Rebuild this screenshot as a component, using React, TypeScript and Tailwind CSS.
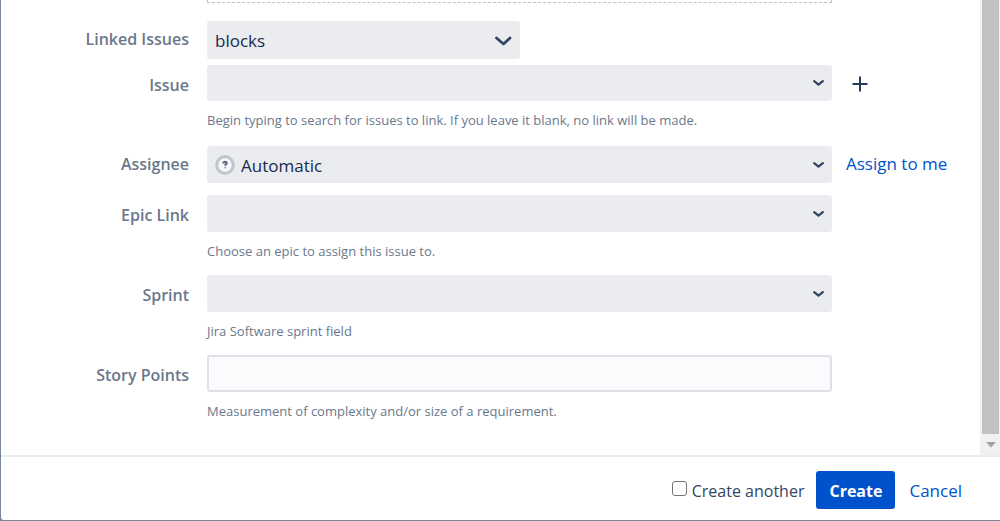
import type { ReactNode } from "react";

const controlClass =
  "block w-full appearance-none rounded-[3px] bg-[#ebecf0] pt-[2px] pr-8 text-[17px] text-[#172b4d] outline-none focus:ring-2 focus:ring-[#4c9aff]";

function Chevron({ large = false }: { large?: boolean }) {
  return large ? (
    <svg
      viewBox="0 0 18 12"
      aria-hidden="true"
      className="pointer-events-none absolute top-1/2 right-2 h-3 w-[18px] -translate-y-1/2"
    >
      <path d="M2.500 4 9.500 10l6.500-6" fill="none" stroke="#344563" strokeWidth="2.800" strokeLinecap="round" strokeLinejoin="round" />
    </svg>
  ) : (
    <svg
      viewBox="0 0 12 8"
      aria-hidden="true"
      className="pointer-events-none absolute top-1/2 right-2 h-2 w-3 -translate-y-1/2"
    >
      <path d="M2.200 2.200 6.500 5.600l4.300-3.400" fill="none" stroke="#344563" strokeWidth="2.300" strokeLinecap="round" strokeLinejoin="round" />
    </svg>
  );
}

type FieldProps = {
  id: string;
  label: string;
  help?: string;
  aside?: ReactNode;
  className?: string;
  children: ReactNode;
};

function Field({ id, label, help, aside, className = "", children }: FieldProps) {
  return (
    <div className={`flex items-start ${className}`}>
      <label
        htmlFor={id}
        className={`w-[188px] shrink-0 text-right text-base leading-6 font-semibold text-[#6b778c] ${help ? "pt-2" : "pt-1.5"}`}
      >
        {label}
      </label>
      <div className="ml-[18px] min-w-0 flex-1">
        {children}
        {help && <p className="mt-2 text-[13px] leading-[22px] text-[#6b778c]">{help}</p>}
      </div>
      <div className="w-[148px] shrink-0 pl-[14px]">{aside}</div>
    </div>
  );
}

function UnassignedAvatar() {
  return (
    <svg
      viewBox="0 0 20 20"
      aria-hidden="true"
      className="pointer-events-none absolute top-1/2 left-2 size-5 -translate-y-1/2"
    >
      <circle cx="10" cy="10" r="8.300" fill="#f7f8fa" stroke="#c1c7d0" strokeWidth="3.200" />
      <path
        d="M8.400 8.400c0-1.200.7-1.600 1.700-1.600s1.600.5 1.600 1.400c0 1.100-1.500 1.100-1.500 2.600"
        fill="none"
        stroke="#5e6c84"
        strokeWidth="2.200"
      />
      <circle cx="10.200" cy="12.600" r="0.900" fill="#8993a4" />
    </svg>
  );
}

export default function App() {
  return (
    <div className="flex min-h-screen flex-col bg-[#7a869a] pb-px pl-px font-['Open_Sans','Noto_Sans',sans-serif]">
      <form className="flex flex-1 flex-col rounded-bl-[3px] bg-white" onSubmit={(e) => e.preventDefault()}>
        <div className="flex flex-1">
          <div className="min-w-0 flex-1">
            <div className="mr-[148px] ml-[206px] h-[3px] border border-t-0 border-dashed border-[#c1c1c1]" />
            <Field id="linked" label="Linked Issues" className="pt-[18px]">
              <div className="relative w-1/2 min-w-[313px]">
                <select id="linked" className={`${controlClass} h-[38px] pl-2`}>
                  <option>blocks</option>
                </select>
                <Chevron large />
              </div>
            </Field>
            <Field
              id="issue"
              label="Issue"
              help="Begin typing to search for issues to link. If you leave it blank, no link will be made."
              className="pt-[6px]"
              aside={
                <button type="button" aria-label="Link another issue" className="flex h-[38px] w-7 items-center justify-center">
                  <svg viewBox="0 0 16 16" aria-hidden="true" className="size-4">
                    <path d="M8 .5v15M.5 8h15" fill="none" stroke="#253858" strokeWidth="2" />
                  </svg>
                </button>
              }
            >
              <div className="relative">
                <select id="issue" className={`${controlClass} h-9 pl-2`}>
                  <option value=""></option>
                </select>
                <Chevron />
              </div>
            </Field>
            <Field
              id="assignee"
              label="Assignee"
              className="pt-[15px]"
              aside={
                <a href="#assign" className="block pt-1.5 text-[17px] leading-6 whitespace-nowrap text-[#0052cc]">
                  Assign to me
                </a>
              }
            >
              <div className="relative">
                <select id="assignee" className={`${controlClass} h-[37px] pl-[34px]`}>
                  <option>Automatic</option>
                </select>
                <UnassignedAvatar />
                <Chevron />
              </div>
            </Field>
            <Field id="epic" label="Epic Link" help="Choose an epic to assign this issue to." className="pt-3">
              <div className="relative">
                <select id="epic" className={`${controlClass} h-[37px] pl-2`}>
                  <option value=""></option>
                </select>
                <Chevron />
              </div>
            </Field>
            <Field id="sprint" label="Sprint" help="Jira Software sprint field" className="pt-[13px]">
              <div className="relative">
                <select id="sprint" className={`${controlClass} h-[37px] pl-2`}>
                  <option value=""></option>
                </select>
                <Chevron />
              </div>
            </Field>
            <Field
              id="points"
              label="Story Points"
              help="Measurement of complexity and/or size of a requirement."
              className="pt-[13px]"
            >
              <input
                id="points"
                type="text"
                className="block h-[37px] w-full rounded-[3px] border-2 border-[#dfe1e6] bg-[#fafbfc] px-2 text-[17px] text-[#172b4d] outline-none focus:border-[#4c9aff]"
              />
            </Field>
          </div>
          <div aria-hidden="true" className="flex w-5 shrink-0 flex-col bg-[#f1f1f1] pr-px pl-[2px]">
            <div className="flex-1 bg-[#c1c1c1]" />
            <div className="flex h-[21px] items-center justify-center">
              <svg viewBox="0 0 10 6" className="h-[6px] w-[10px]">
                <path d="M0 0h10L5 5.500z" fill="#a3a3a3" />
              </svg>
            </div>
          </div>
        </div>
        <div className="flex h-[65px] items-center justify-end border-t-2 border-[#ebecf0] pt-[2px] pr-[38px] text-base leading-6">
          <label className="flex items-start gap-[5px] pt-[2px] text-[#344563]">
            <input
              type="checkbox"
              className="mt-[2px] size-[15px] appearance-none rounded-[3px] border border-[#767676] bg-white checked:bg-[#0052cc]"
            />
            Create another
          </label>
          <button type="submit" className="ml-3 h-[38px] rounded-[3px] bg-[#0052cc] px-[13px] pt-[2px] font-bold text-white">
            Create
          </button>
          <a href="#cancel" className="ml-[14px] pt-[2px] text-[17px] text-[#0052cc]">
            Cancel
          </a>
        </div>
      </form>
    </div>
  );
}
